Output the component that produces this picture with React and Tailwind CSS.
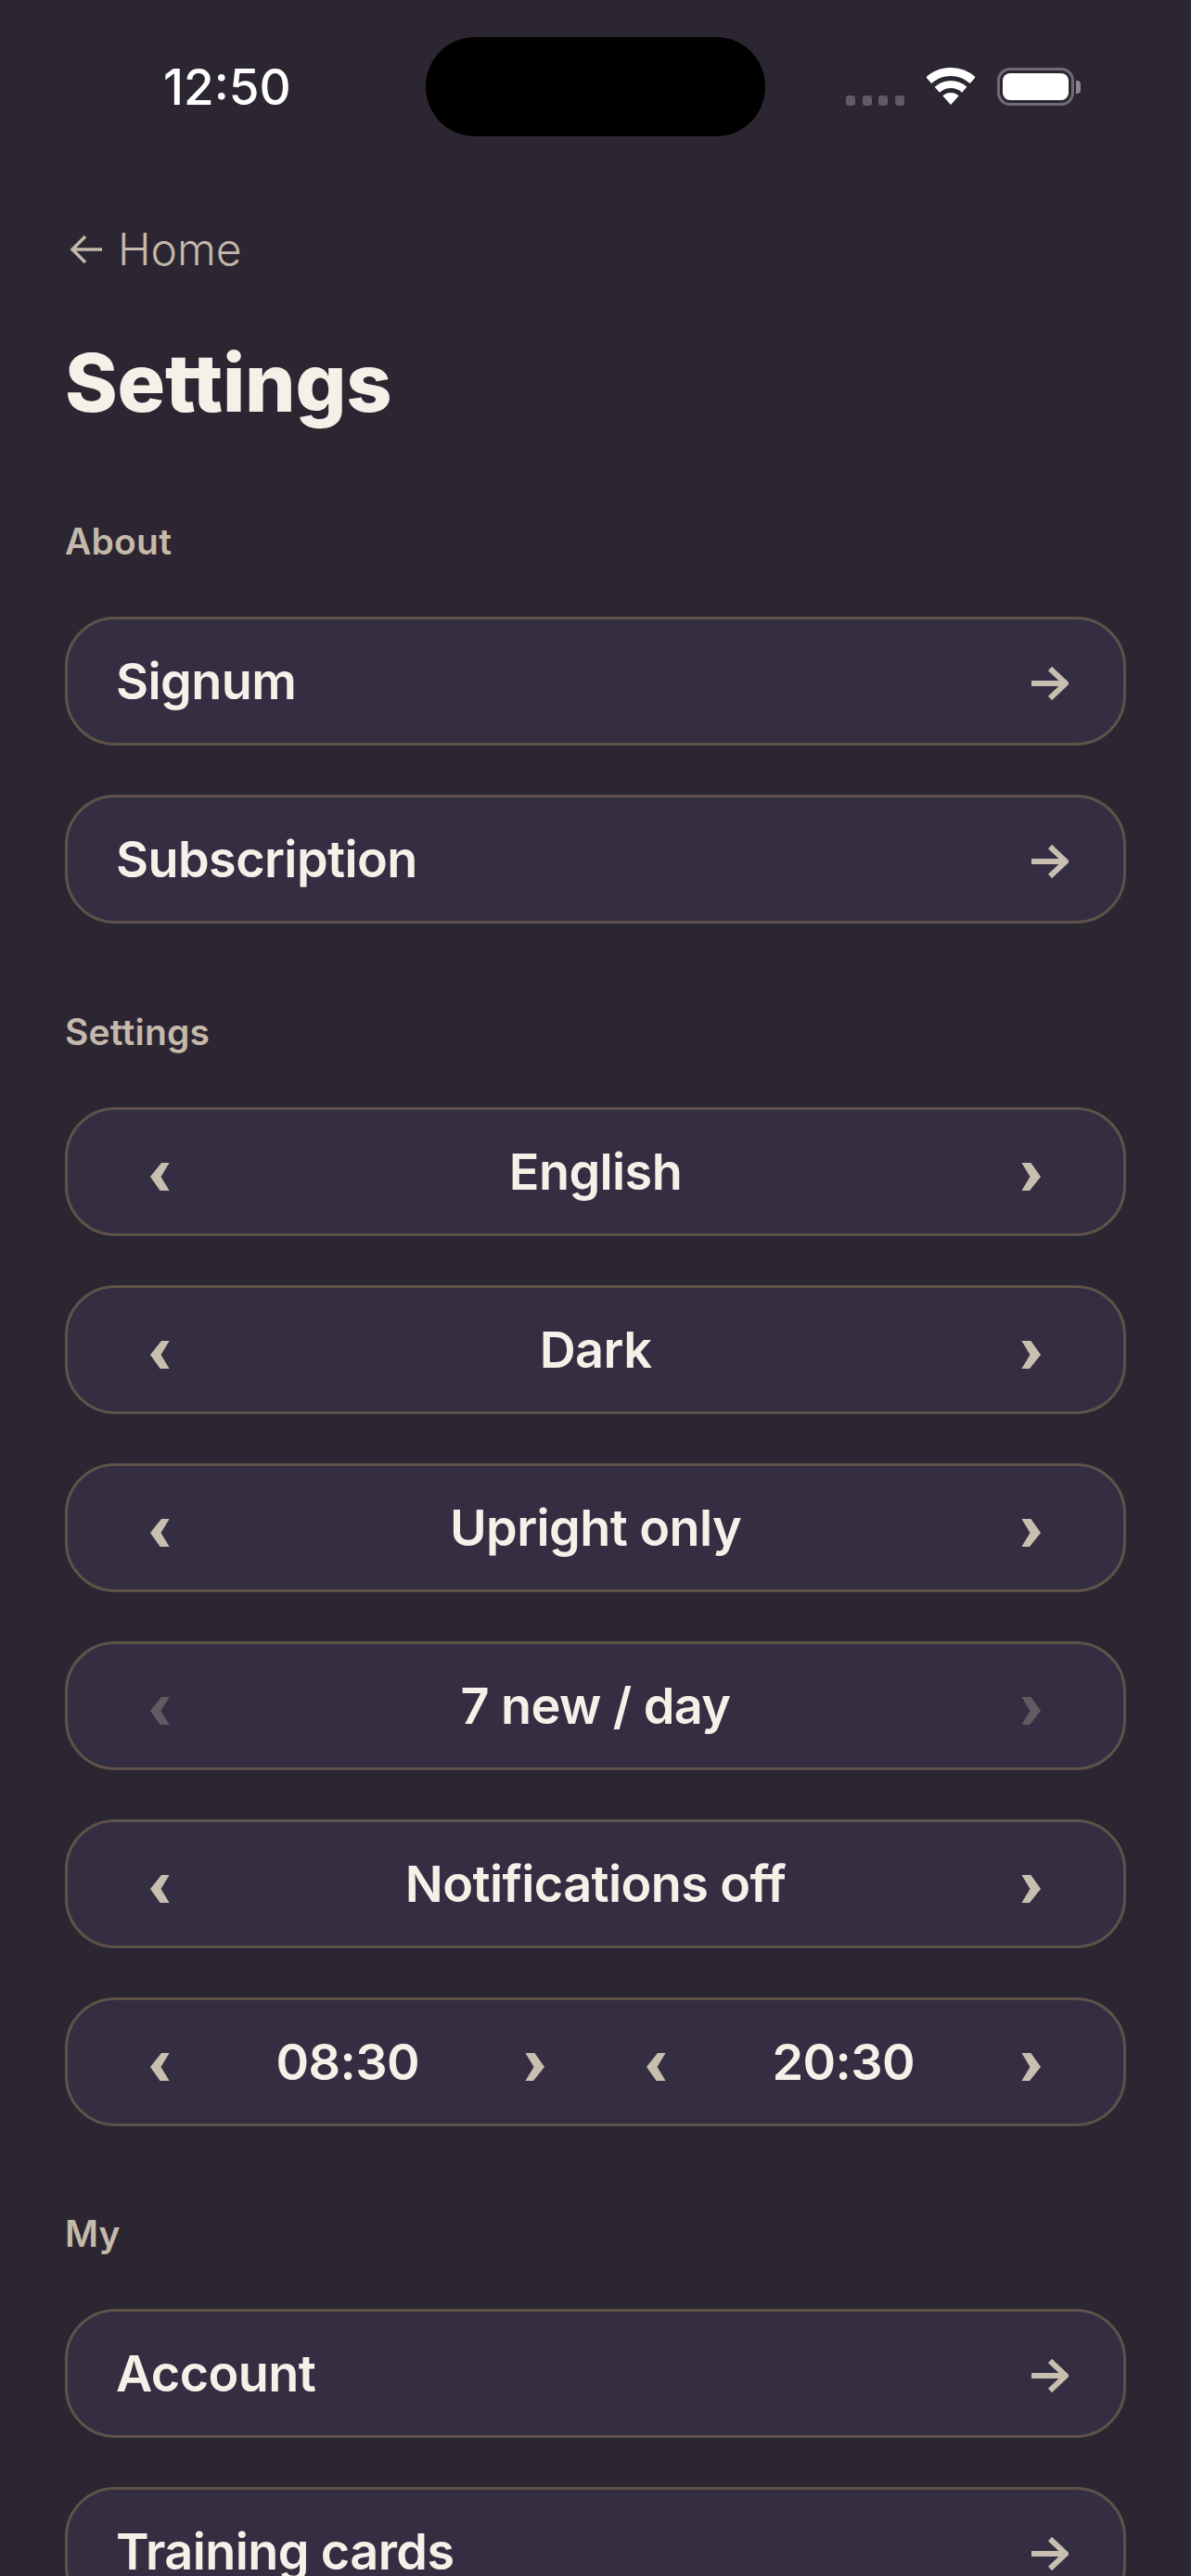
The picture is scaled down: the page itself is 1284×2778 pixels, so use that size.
const font = { fontFamily: 'Inter, sans-serif' }

function ArrowRight() {
  return (
    <svg width="40" height="36" viewBox="0 0 40 36" fill="none" stroke="#c9bfb0" strokeWidth="6" className="mt-[4px] shrink-0">
      <path d="M0 18H36M20 2L37 18L20 34" />
    </svg>
  )
}

function Chevron({ right, dim }) {
  return (
    <svg width="21" height="30" viewBox="0 0 21 30" fill="#c9bfb0" className={`mt-[11px] shrink-0 ${dim ? 'opacity-30' : ''} ${right ? 'rotate-180' : ''}`}>
      <path d="M12 0H20.6L11.5 15L20.6 30H10.6L0 15Z" />
    </svg>
  )
}

function Wifi() {
  return (
    <svg width="52" height="40" viewBox="0 0 52 40" fill="none" stroke="#fff">
      <path d="M2.25 13.6A35.5 35.5 0 0 1 49.75 13.6" strokeWidth="9" />
      <path d="M11.3 23.65A22 22 0 0 1 40.7 23.65" strokeWidth="8" />
      <path d="M26 40L17.3 30.3A13 13 0 0 1 34.7 30.3Z" fill="#fff" stroke="none" />
    </svg>
  )
}

function StatusBar() {
  return (
    <div className="flex items-start h-[147px] pt-[40px] pl-[176px]">
      <span className="w-[283px] mt-[24px] text-[53px] leading-[60px] font-medium text-white">12:50</span>
      <div className="w-[366px] h-[107px] rounded-[53px] bg-black" />
      <div className="flex gap-[7.6px] ml-[87px] mt-[63px]">
        {[0, 1, 2, 3].map(i => <div key={i} className="w-[10px] h-[10.5px] rounded-[3px] bg-[#5e5a66]" />)}
      </div>
      <div className="ml-[24px] mt-[33px]"><Wifi /></div>
      <div className="flex items-center ml-[24px] mt-[33px]">
        <div className="w-[83px] h-[41px] rounded-[14px] border-[3px] border-[#6f6c76] p-[3px]">
          <div className="w-full h-full rounded-[8px] bg-white" />
        </div>
        <div className="w-[5px] h-[14px] ml-[2px] rounded-r-[4px] bg-[#8b8891]" />
      </div>
    </div>
  )
}

function Section({ title, className, children }) {
  return (
    <section className={className}>
      <h2 className="h-[48px] mb-[57px] text-[39px] leading-[48px] font-semibold tracking-[0.2px] text-[#c4b9aa]">{title}</h2>
      <div className="flex flex-col gap-[53px]">{children}</div>
    </section>
  )
}

function LinkRow({ label }) {
  return (
    <div className="flex items-center justify-between h-[139px] pl-[52px] pr-[59px] rounded-[54px] border-[3px] border-[#5f5249] bg-[#352e42]">
      <span className="text-[54px] leading-[64px] font-semibold tracking-[-0.6px] text-[#f5f1e9]">{label}</span>
      <ArrowRight />
    </div>
  )
}

function Stepper({ value, dim }) {
  return (
    <div className="flex flex-1 items-center justify-between min-w-0">
      <Chevron dim={dim} />
      <span className="text-[54px] leading-[64px] font-semibold tracking-[-0.6px] text-[#f5f1e9]">{value}</span>
      <Chevron right dim={dim} />
    </div>
  )
}

function StepperRow({ values, dim }) {
  return (
    <div className="flex items-center gap-[109px] h-[139px] px-[89px] rounded-[54px] border-[3px] border-[#5f5249] bg-[#352e42]">
      {values.map(v => <Stepper key={v} value={v} dim={dim} />)}
    </div>
  )
}

export default function App() {
  return (
    <div style={font} className="h-[2778px] overflow-hidden bg-[#2c2633]">
      <StatusBar />
      <main className="px-[70px]">
        <a className="flex items-center h-[60px] mt-[92px] gap-[17px] text-[48px] leading-[60px] font-light text-[#c4b9aa]">
          <svg width="35" height="30" viewBox="0 0 35 30" fill="none" stroke="#c4b9aa" strokeWidth="3.5" className="ml-[5px] shrink-0">
            <path d="M35 15H3M17 1L3 15L17 29" />
          </svg>
          Home
        </a>
        <h1 className="h-[100px] mt-[64px] text-[86px] leading-[100px] font-extrabold tracking-[-0.2px] text-[#f5f1e9]">Settings</h1>

        <Section title="About" className="mt-[97px]">
          <LinkRow label="Signum" />
          <LinkRow label="Subscription" />
        </Section>

        <Section title="Settings" className="mt-[93px]">
          <StepperRow values={['English']} />
          <StepperRow values={['Dark']} />
          <StepperRow values={['Upright only']} />
          <StepperRow values={['7 new / day']} dim />
          <StepperRow values={['Notifications off']} />
          <StepperRow values={['08:30', '20:30']} />
        </Section>

        <Section title="My" className="mt-[92px]">
          <LinkRow label="Account" />
          <LinkRow label="Training cards" />
        </Section>
      </main>
    </div>
  )
}
